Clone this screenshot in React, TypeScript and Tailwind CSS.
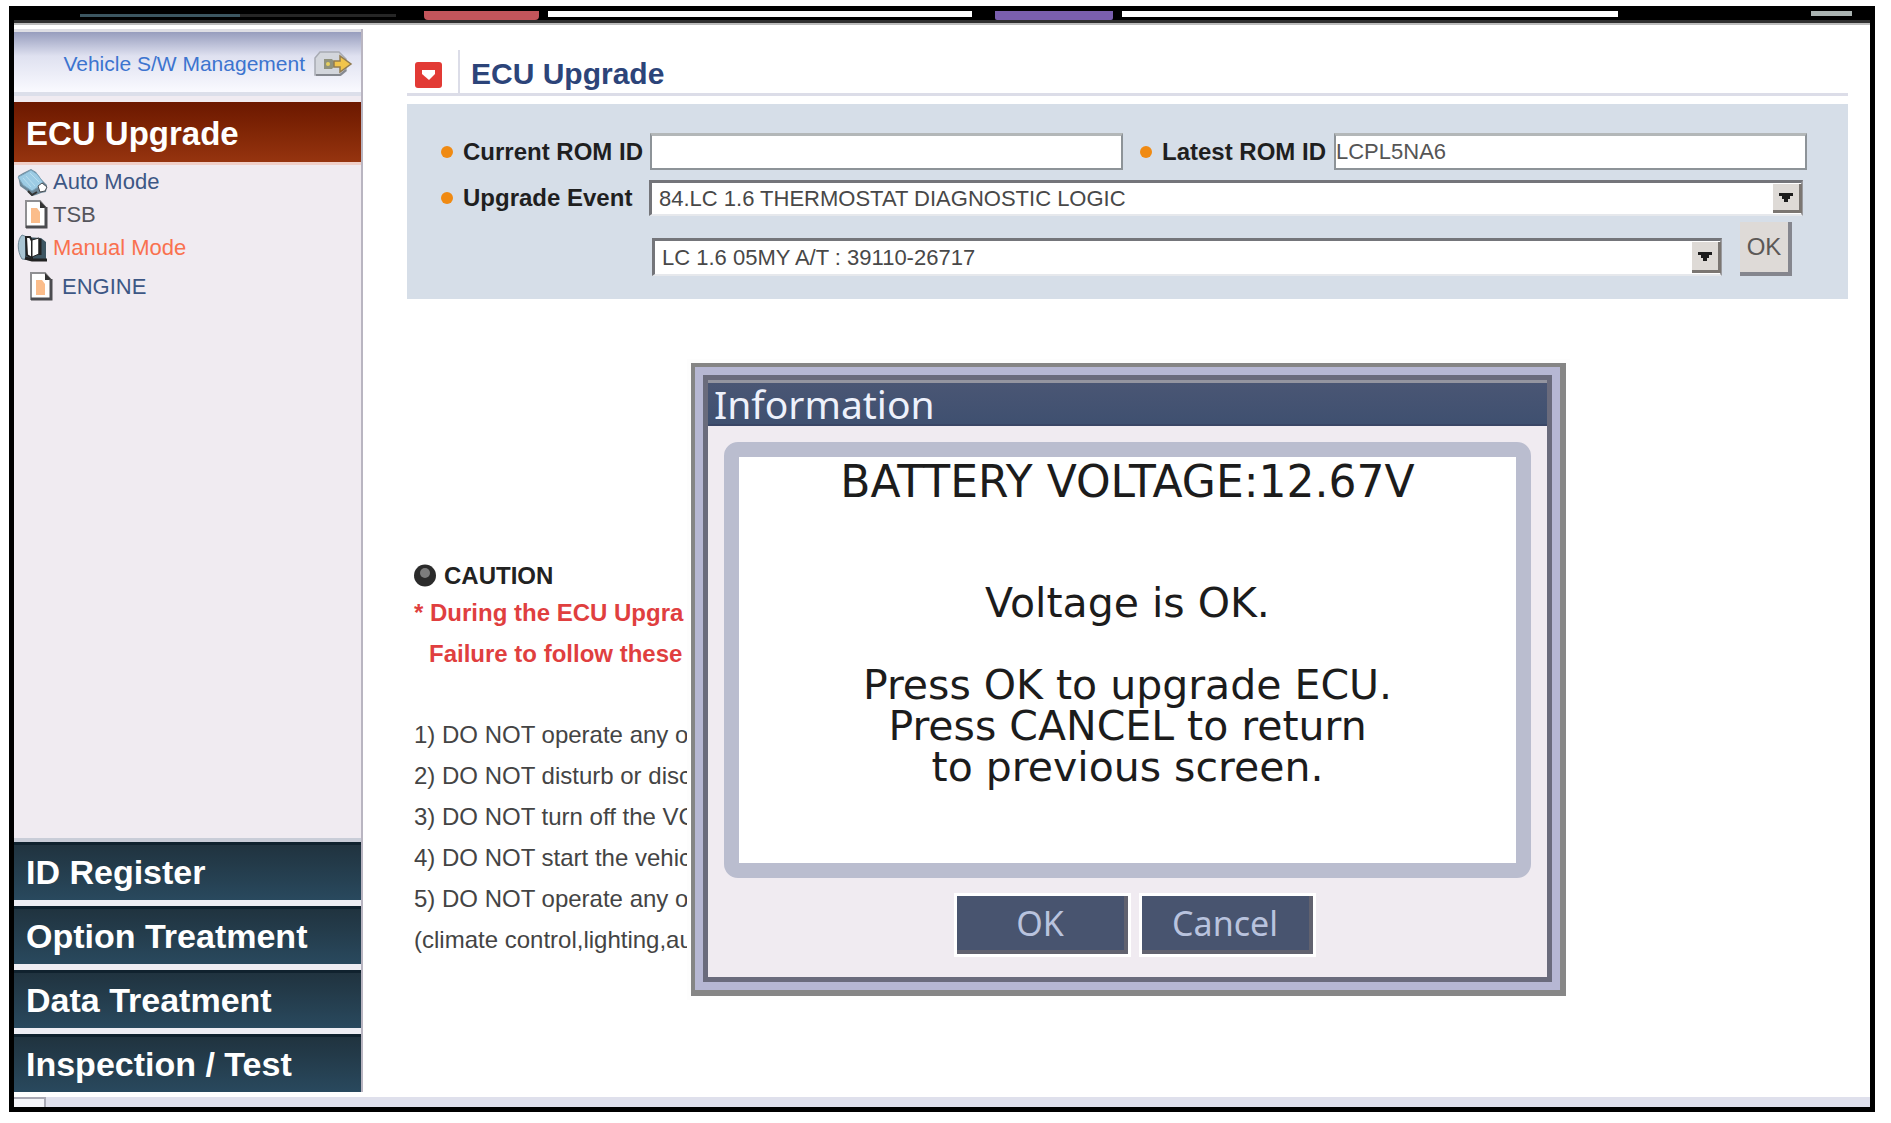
import React, { useState } from 'react'

const SECTIONS = ['ID Register', 'Option Treatment', 'Data Treatment', 'Inspection / Test']

const CAUTIONS = [
  '1) DO NOT operate any other',
  '2) DO NOT disturb or disconnect',
  '3) DO NOT turn off the VCI',
  '4) DO NOT start the vehicle',
  '5) DO NOT operate any other',
  '(climate control,lighting,audio',
]

function DocIcon() {
  return (
    <svg width="25" height="31" viewBox="0 0 25 31" className="shrink-0">
      <path d="M2 2h14l6 7v19H2z" fill="#fff" stroke="#8f8f92" strokeWidth="2" />
      <path d="M16 2v7h7z" fill="#333" />
      <path d="M22 8v20H2" fill="none" stroke="#4c4c50" strokeWidth="3" />
      <path d="M7 9h6l3 4v11H7z" fill="#fbbd8b" />
    </svg>
  )
}

function AutoIcon() {
  return (
    <svg width="32" height="28" viewBox="0 0 32 28" className="shrink-0">
      <path d="M1 8 6 5l8-4 5 3 5 7 6 6-1 7-5 1-5 2-4 1-5-5-7-5z" fill="#6d8798" />
      <path d="M1 9 7 6l7-4 6 4 6 8-5 5-6 4-9-6z" fill="#9ccbe4" stroke="#7aa3bb" />
      <path d="M6 10l8 9M9 8l9 10M13 5l9 9" stroke="#b9deef" strokeWidth="1" />
      <path d="M21 18l4-3 5 4-2 4-5 1z" fill="#fff" stroke="#4b4f55" />
      <path d="M11 23l4 4 5-3" fill="none" stroke="#333" strokeWidth="2" />
    </svg>
  )
}

function ManualIcon() {
  return (
    <svg width="32" height="29" viewBox="0 0 32 29" className="shrink-0">
      <path d="M5 2C0 7 0 18 5 26l9 1 1-21z" fill="#a9c5d3" stroke="#6e8796" />
      <path d="M8 4v20l7 3h14V9l-5-4z" fill="#3d5562" />
      <path d="M9 4h4l2 4v17l-5-3z" fill="#fff" stroke="#222" strokeWidth="2" />
      <path d="M15 7l7-2v16l-7 3z" fill="#fff" stroke="#222" strokeWidth="1" />
      <path d="M23 6v16M8 25l7 2h15" fill="none" stroke="#222" strokeWidth="3" />
    </svg>
  )
}

function TransferIcon() {
  return (
    <svg width="40" height="28" viewBox="0 0 40 28" className="shrink-0">
      <path d="M2 8 7 2h19l7 7v12l-5 4H2z" fill="#d3d6dc" stroke="#a8abb3" strokeWidth="1.5" />
      <path d="M3 25h24l6-5" fill="none" stroke="#85888f" strokeWidth="2" />
      <path d="M11 9h8l4 5-4 5h-8z" fill="#8f917c" />
      <circle cx="15" cy="14" r="2" fill="#e6cf5e" />
      <path d="M21 11h6V6l11 8-11 8v-5h-6z" fill="#f2c54b" stroke="#927c50" strokeWidth="1.5" />
    </svg>
  )
}

function Bullet() {
  return <span className="mr-[10px] size-3 shrink-0 rounded-full bg-[#f08a12]" />
}

function ComboBox({ id, label, value, className }: { id: string, label?: string, value: string, className: string }) {
  return (
    <div className={`relative min-w-0 flex-1 ${className}`}>
      <select
        id={id}
        aria-label={label}
        className="block h-full w-full appearance-none border-t-[3px] border-l-[3px] border-r-2 border-b-2 border-t-[#74757a] border-r-[#9a9a9e] border-b-[#e6e8ec] border-l-[#74757a] bg-white pl-[7px] text-[22px] leading-[28px] text-[#484848] outline-none"
      >
        <option>{value}</option>
      </select>
      <span className="pointer-events-none absolute top-[4px] right-px bottom-[3px] flex w-[29px] items-center justify-center border-r-[3px] border-b-[3px] border-[#7b7672] bg-[#dedad6]">
        <svg width="14" height="9" viewBox="0 0 14 9"><path d="M0 0h14v3h-3v3H9v3H5V6H3V3H0z" fill="#1c1c1c" /></svg>
      </span>
    </div>
  )
}

function TopStrip() {
  return (
    <div className="flex h-[14px] items-start border-b-2 border-[#bdbdbd] bg-black">
      <div className="flex h-3 flex-1 items-start border-b-[3px] border-[#303030]">
        <span className="ml-[66px] h-[6px] w-[160px] border-b-[3px] border-[#3c5661]" />
        <span className="h-[6px] w-[156px] border-b-[3px] border-[#262626]" />
        <span className="ml-[28px] h-[9px] w-[115px] rounded-b-[4px] bg-[#c2555b]" />
        <span className="ml-[9px] h-[6px] w-[424px] bg-white" />
        <span className="ml-[23px] h-[9px] w-[118px] rounded-b-[2px] bg-[#7a5fae]" />
        <span className="ml-[9px] h-[6px] flex-1 bg-white" />
        <span className="mr-[18px] ml-[193px] h-[5px] w-[41px] bg-[#aab3b1]" />
      </div>
    </div>
  )
}

function Sidebar() {
  return (
    <aside className="mt-1 mb-[5px] flex w-[349px] shrink-0 flex-col border-r-2 border-[#b9b5c1] bg-[#f0ebf1]">
      <a href="#vehicle" className="flex h-[67px] items-center justify-end gap-2 border-t-[3px] border-b-[4px] border-t-[#dedee4] border-b-[#dcdfea] bg-linear-to-b from-[#979dbd] via-[#dfe1f0] via-40% to-[#fafaff] pt-1 pr-[8px] text-[21px] text-[#3c74cf]">
        Vehicle S/W Management
        <TransferIcon />
      </a>
      <button className="mt-[6px] h-[60px] bg-linear-to-b from-[#6c1800] to-[#96340f] pt-1 pl-3 text-left text-[33px] font-bold text-white">
        ECU Upgrade
      </button>
      <nav className="flex flex-1 flex-col border-t-[3px] border-[#f0cfc8] text-[22px] leading-[33px] text-[#3d5785]">
        <a href="#auto" className="flex h-[33px] items-center gap-1 pl-[3px]"><AutoIcon />Auto Mode</a>
        <a href="#tsb" className="flex h-[33px] items-center gap-1 pl-[10px] text-[#55555c]"><DocIcon />TSB</a>
        <a href="#manual" className="flex h-[33px] items-center gap-1 pl-[3px] text-[#f9714f]"><ManualIcon />Manual Mode</a>
        <a href="#engine" className="mt-[6px] flex h-[33px] items-center gap-2 pl-[15px]"><DocIcon />ENGINE</a>
      </nav>
      <div className="flex flex-col gap-[6px] border-t-[4px] border-[#c9cdd8] bg-[#eeeef4]">
        {SECTIONS.map(name => (
          <button key={name} className="h-[58px] border-t-[3px] border-[#10222e] bg-linear-to-b from-[#20333f] to-[#29495e] pb-[2px] pl-3 text-left text-[34px] leading-[50px] font-bold text-white">
            {name}
          </button>
        ))}
      </div>
    </aside>
  )
}

function UpgradeForm() {
  return (
    <form onSubmit={e => e.preventDefault()} className="mt-2 bg-[#d6dee8] pt-[29px] pr-[41px] pb-[23px] pl-[34px] text-[24px] text-[#1f1f1f]">
      <div className="flex items-center">
        <Bullet />
        <label htmlFor="current" className="w-[187px] shrink-0 font-bold whitespace-nowrap">Current ROM ID</label>
        <input id="current" className="h-[37px] min-w-0 flex-1 border-2 border-t-[3px] border-[#8d9398] border-t-[#b3b7b8] bg-white text-[22px] outline-none" />
        <span className="w-[17px] shrink-0" />
        <Bullet />
        <label htmlFor="latest" className="w-[172px] shrink-0 font-bold whitespace-nowrap">Latest ROM ID</label>
        <input id="latest" defaultValue="LCPL5NA6" className="h-[37px] min-w-0 flex-1 border-2 border-t-[3px] border-[#8d9398] border-t-[#b3b7b8] bg-white text-[22px] text-[#555] outline-none" />
      </div>
      <div className="mt-[10px] mr-1 flex items-center">
        <Bullet />
        <label htmlFor="event" className="w-[186px] shrink-0 font-bold whitespace-nowrap">Upgrade Event</label>
        <ComboBox id="event" value="84.LC 1.6 THERMOSTAT DIAGNOSTIC LOGIC" className="h-[36px]" />
      </div>
      <div className="mt-[6px] mr-[15px] flex items-end gap-[18px] pl-[211px]">
        <ComboBox id="rom" label="ROM" value="LC 1.6 05MY A/T : 39110-26717" className="h-[38px]" />
        <button className="h-[54px] w-[52px] border-r-[4px] border-b-[4px] border-[#85868e] bg-[#dedad7] text-[24px] text-[#5c5856]">OK</button>
      </div>
    </form>
  )
}

function InfoDialog({ onClose }: { onClose: () => void }) {
  return (
    <div role="dialog" aria-labelledby="info-title" className="absolute top-[338px] left-[328px] w-[875px] border-[4px] border-r-[6px] border-b-[6px] border-[#858585] bg-[#b6b7d3] p-2 outline-4 outline-[#fdfdfd]">
      <div className="border-[5px] border-[#6a6b7c] bg-[#f0ebf1]">
        <h2 id="info-title" className="h-[46px] border-t-[3px] border-b-[2px] border-t-[#9495a0] border-b-[#3a4666] bg-linear-to-b from-[#4a5674] to-[#3f5070] pl-[6px] font-['Noto_Sans',sans-serif] text-[39px] leading-[42px] text-[#eef1fb]">
          Information
        </h2>
        <div className="mx-4 mt-[16px] h-[436px] rounded-[14px] border-[15px] border-[#babdcf] bg-white pt-1 text-center font-['DejaVu_Sans',sans-serif] text-[41px] leading-[41px] text-[#1c1c1c]">
          <p className="text-[44px]">BATTERY VOLTAGE:12.67V</p>
          <p className="mt-[81px]">Voltage is OK.</p>
          <p className="mt-[41px]">
            Press OK to upgrade ECU.<br />
            Press CANCEL to return<br />
            to previous screen.
          </p>
        </div>
        <div className="flex justify-center gap-[14px] pt-[18px] pb-[23px] pl-[14px] font-['Noto_Sans',sans-serif] text-[34px] text-[#b9c3de]">
          <button onClick={onClose} className="h-[58px] w-[171px] border-r-[4px] border-b-[4px] border-[#61626f] bg-[#48546f] leading-[50px] outline-3 outline-white">OK</button>
          <button onClick={onClose} className="h-[58px] w-[171px] border-r-[4px] border-b-[4px] border-[#61626f] bg-[#48546f] leading-[50px] outline-3 outline-white">Cancel</button>
        </div>
      </div>
    </div>
  )
}

export default function App() {
  const [open, setOpen] = useState(true)

  return (
    <div className="flex min-h-screen bg-white pt-[6px] pr-4 pb-[11px] pl-[9px] font-['Liberation_Sans',Arial,sans-serif]">
      <div className="flex min-w-0 flex-1 flex-col border-[5px] border-black">
        <TopStrip />
        <div className="flex flex-1">
          <Sidebar />
          <main className="relative min-w-0 flex-1 pt-[25px] pr-[22px] pl-[44px]">
            <header className="flex h-[46px] items-stretch border-b-[3px] border-[#dcdde8]">
              <span className="mt-3 ml-2 flex h-[26px] w-[27px] items-center justify-center rounded-[3px] bg-[#e23a35]">
                <svg width="15" height="12" viewBox="0 0 15 12"><path d="M1 1h13v4l-6 6-7-6z" fill="#fff" /></svg>
              </span>
              <h1 className="ml-[16px] border-l-2 border-[#dcdde8] pl-[11px] text-[30px] leading-[48px] font-bold text-[#2c4479]">ECU Upgrade</h1>
            </header>
            <UpgradeForm />
            <section className="pt-[259px] pl-[7px] text-[24px] leading-[41px] whitespace-nowrap text-[#444]">
              <h2 className="flex h-[34px] items-center gap-2 font-bold text-[#222]">
                <svg width="22" height="23" viewBox="0 0 22 23">
                  <circle cx="11" cy="11.5" r="11" fill="#2b2b2b" />
                  <circle cx="11" cy="9" r="5" fill="#7d7d7d" />
                </svg>
                CAUTION
              </h2>
              <p className="font-bold text-[#e03f3f]">* During the ECU Upgra</p>
              <p className="mb-[40px] pl-[15px] font-bold text-[#e03f3f]">Failure to follow these</p>
              {CAUTIONS.map(line => <p key={line}>{line}</p>)}
            </section>
            {open && <InfoDialog onClose={() => setOpen(false)} />}
          </main>
        </div>
        <footer className="h-[10px] bg-[#dfe0ec]">
          <div className="h-full w-[32px] border-t-2 border-r-2 border-[#a9a9b4] bg-[#f4f4f8]" />
        </footer>
      </div>
    </div>
  )
}
